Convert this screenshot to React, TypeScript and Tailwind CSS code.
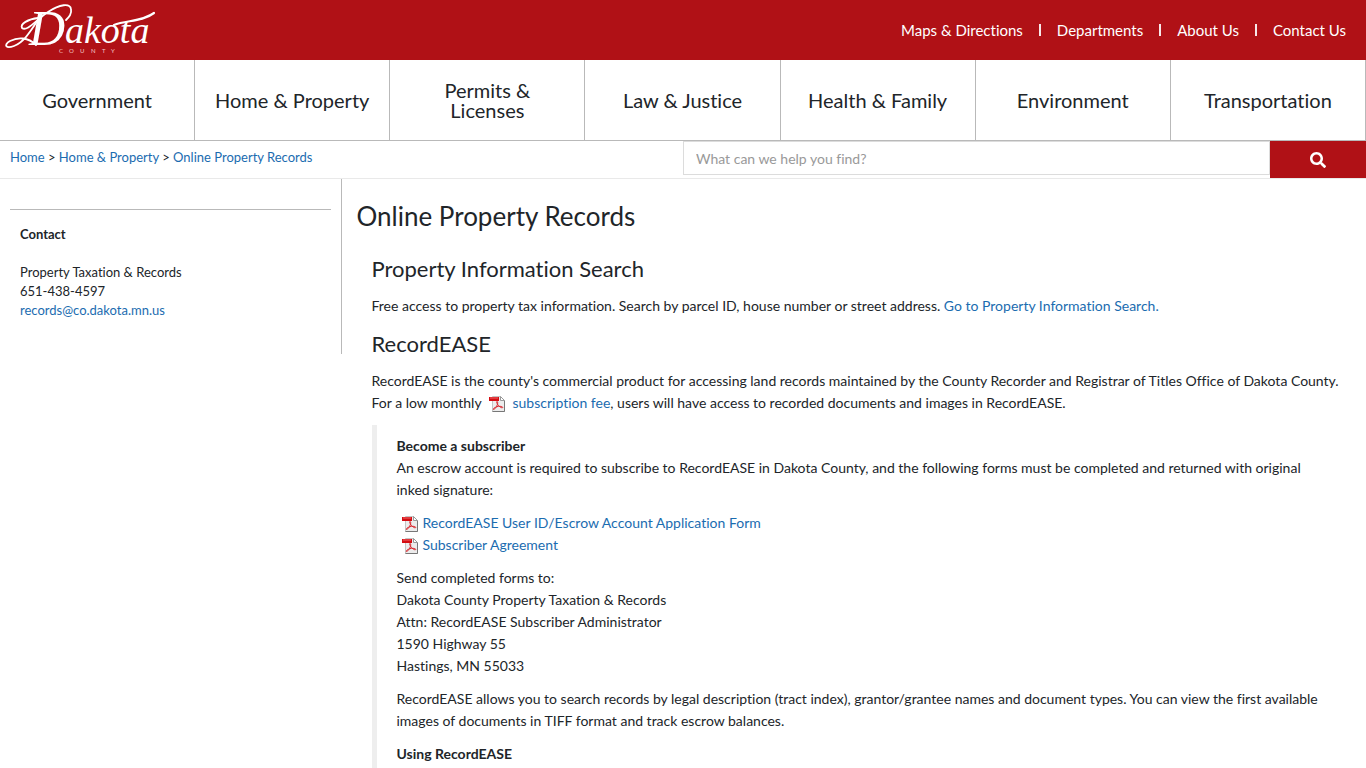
import type { ReactNode } from "react";
import { FaSearch } from "react-icons/fa";

const topLinks = ["Maps & Directions", "Departments", "About Us", "Contact Us"];

const sections = [
  "Government",
  "Home & Property",
  "Permits & Licenses",
  "Law & Justice",
  "Health & Family",
  "Environment",
  "Transportation",
];

function Logo() {
  return (
    <svg width="160" height="60" viewBox="0 0 160 60" role="img" aria-label="Dakota County" fill="#fff">
      <text x="29" y="45" fontFamily="Liberation Serif, serif" fontStyle="italic" fontSize="50">
        D
      </text>
      <text x="65" y="43" fontFamily="Liberation Serif, serif" fontStyle="italic" fontSize="38">
        akota
      </text>
      <g fill="none" stroke="#fff" strokeLinecap="round">
        <path d="M36 45C28 37 18 37 10 41C3 45 6 49 14 46C24 42 30 32 38 20" strokeWidth="1.8" />
        <path d="M38 18C28 19 20 24 22 28C27 32 36 20 48 12C60 4 70 3 71 9C72 14 69 17 66 20" strokeWidth="1.8" />
        <path d="M114 25C126 20 142 22 154 13" strokeWidth="2.200" />
      </g>
      <text x="59 69 80 91 102 111" y="53" fontFamily="Lato, sans-serif" fontSize="6" fill="#f3c5c5">
        COUNTY
      </text>
    </svg>
  );
}

function PdfIcon({ className }: { className: string }) {
  return (
    <svg width="16" height="16" viewBox="0 0 16 16" className={className} aria-hidden="true">
      <path d="M3.5.5h8l4 4v11h-12z" fill="#ececec" stroke="#c4c4c4" />
      <path d="M15.5 4.5v11h-12" fill="none" stroke="#777" />
      <path d="M11.5.5v4h4z" fill="#fff" stroke="#999" />
      <path d="M0 1h10v4H0z" fill="#d40d12" />
      <path d="M1 2h8" stroke="#ef6a6a" />
      <path
        d="M8 5.5c1.2 0 .8 3-.6 5.2C6.3 12.5 4.8 14 4.3 13.4c-.6-.8 2.4-2.700 5-3 2.200-.3 4.700.2 4.400 1.100-.4 1-3-.5-4.400-2.200C8 7.800 7.200 5.500 8 5.500z"
        fill="none"
        stroke="#d8242a"
      />
    </svg>
  );
}

function TextLink({ children }: { children: ReactNode }) {
  return (
    <a href="#" className="text-[#1b6cb0] hover:underline">
      {children}
    </a>
  );
}

export default function App() {
  return (
    <div className="h-screen overflow-hidden bg-white font-['Lato',sans-serif] text-[#212529] [font-variant-ligatures:no-common-ligatures]">
      <header>
        <div className="flex h-15 items-center justify-between bg-[#b01116]">
          <a href="#">
            <Logo />
          </a>
          <ul className="flex pr-5 text-[15px] text-white">
            {topLinks.map((label, i) => (
              <li key={label} className="flex items-center">
                {i > 0 && <span className="mx-4 h-3 w-0.5 bg-white/90" />}
                <a href="#">{label}</a>
              </li>
            ))}
          </ul>
        </div>
        <nav className="grid h-[81px] grid-cols-7 border-b border-[#b9b9b9]">
          {sections.map((label) => (
            <a
              key={label}
              href="#"
              className="flex items-center justify-center border-r border-[#b9b9b9] px-4 text-center text-xl leading-5"
            >
              <span className={label.startsWith("Permits") ? "w-min min-w-24" : ""}>{label}</span>
            </a>
          ))}
        </nav>
        <div className="flex h-[38px] border-b border-[#e9e9e9] text-[13px]">
          <div className="w-1/2 px-2.5 py-2 leading-4">
            <TextLink>Home</TextLink> &gt; <TextLink>Home &amp; Property</TextLink> &gt;{" "}
            <TextLink>Online Property Records</TextLink>
          </div>
          <form className="flex flex-1 items-start" onSubmit={(e) => e.preventDefault()}>
            <input
              type="text"
              aria-label="Search"
              placeholder="What can we help you find?"
              className="h-[34px] min-w-0 flex-1 border border-[#dcdcdc] px-3 text-sm placeholder:text-[#999]"
            />
            <button
              type="submit"
              aria-label="Submit search"
              className="flex h-[37px] w-24 items-center justify-center bg-[#b01116] text-base text-white"
            >
              <FaSearch />
            </button>
          </form>
        </div>
      </header>

      <div className="flex items-start">
        <aside className="h-[175px] w-1/4 shrink-0 border-r border-[#b9b9b9] px-2.5 pt-[30px] text-[13px] leading-[19px]">
          <div className="border-t border-[#b9b9b9] px-2.5 pt-[15px]">
            <h2 className="font-bold">Contact</h2>
            <p className="mt-[19px]">Property Taxation &amp; Records</p>
            <p>651-438-4597</p>
            <p>
              <TextLink>records@co.dakota.mn.us</TextLink>
            </p>
          </div>
        </aside>

        <main className="flex-1 px-[15px] pt-[19px]">
          <h1 className="text-[26px] leading-9">Online Property Records</h1>
          <div className="pt-[19px] pl-[15px] text-sm leading-[22px]">
            <h2 className="text-[22px] leading-8">Property Information Search</h2>
            <p className="mt-2.5">
              Free access to property tax information. Search by parcel ID, house number or street address.{" "}
              <TextLink>Go to Property Information Search.</TextLink>
            </p>
            <h2 className="mt-[11px] text-[22px] leading-8">RecordEASE</h2>
            <p className="mt-2.5">
              RecordEASE is the county's commercial product for accessing land records maintained by the County
              Recorder and Registrar of Titles Office of Dakota County. For a low monthly{" "}
              <PdfIcon className="mx-1 inline align-middle" />{" "}
              <TextLink>subscription fee</TextLink>, users will have access to recorded documents and images in
              RecordEASE.
            </p>
            <div className="mt-[11px] flex flex-col gap-[11px] border-l-[5px] border-[#eee] px-5 py-2.5">
              <p>
                <strong>Become a subscriber</strong>
                <br />
                An escrow account is required to subscribe to RecordEASE in Dakota County, and the following forms
                must be completed and returned with original inked signature:
              </p>
              <ul className="pl-[5px]">
                {["RecordEASE User ID/Escrow Account Application Form", "Subscriber Agreement"].map((form) => (
                  <li key={form} className="flex items-center gap-[5px]">
                    <PdfIcon className="mt-0.5" />
                    <TextLink>{form}</TextLink>
                  </li>
                ))}
              </ul>
              <p>
                Send completed forms to:
                <br />
                Dakota County Property Taxation &amp; Records
                <br />
                Attn: RecordEASE Subscriber Administrator
                <br />
                1590 Highway 55
                <br />
                Hastings, MN 55033
              </p>
              <p>
                RecordEASE allows you to search records by legal description (tract index), grantor/grantee names and
                document types. You can view the first available images of documents in TIFF format and track escrow
                balances.
              </p>
              <p>
                <strong>Using RecordEASE</strong>
              </p>
            </div>
          </div>
        </main>
      </div>
    </div>
  );
}
